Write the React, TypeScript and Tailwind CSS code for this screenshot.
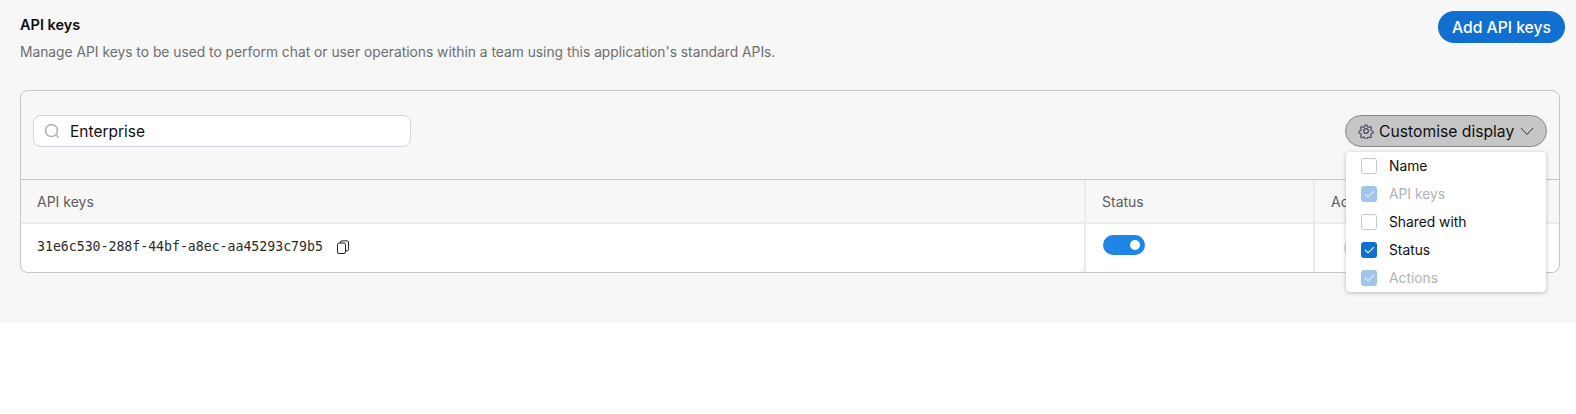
import React from "react";

function Check({ dim }: { dim?: boolean }) {
  return (
    <span className={`flex h-4 w-4 shrink-0 items-center justify-center rounded-[3px] ${dim ? "bg-[#a0c5ec]" : "bg-[#1170cf]"}`}>
      <svg width="11" height="8" viewBox="0 0 11 8" fill="none">
        <path d="M1 4 4 6.800 10 1.200" stroke={dim ? "#e4eefa" : "#ffffff"} strokeWidth="1.100" />
      </svg>
    </span>
  );
}

function Box() {
  return <span className="h-4 w-4 shrink-0 rounded-[3px] border border-[#c6c6c6] bg-white" />;
}

const options = [
  { label: "Name", state: "off" },
  { label: "API keys", state: "dim" },
  { label: "Shared with", state: "off" },
  { label: "Status", state: "on" },
  { label: "Actions", state: "dim" },
];

export default function App() {
  return (
    <div className="h-[414px] w-[1576px] bg-white font-['Inter',sans-serif] overflow-hidden">
      <div className="h-[323px] bg-[#f7f7f7] pl-5 pr-[11px] pt-[11px]">
        <div className="flex items-start justify-between">
          <div>
            <h2 className="pt-[6px] text-[14.500px] leading-[16px] font-semibold text-[#0f0f0f]">API keys</h2>
            <p className="mt-[9px] text-[13.800px] leading-[20px] text-[#6e6e6e]">
              Manage API keys to be used to perform chat or user operations within a team using this application's standard APIs.
            </p>
          </div>
          <button className="h-8 w-[127px] rounded-full bg-[#1170cf] pt-px text-[15.700px] font-medium text-white">Add API keys</button>
        </div>

        <div className="relative mt-[28px] mr-[5px] h-[183px] rounded-lg border border-[#c6c6c6]">
          <div className="flex h-[88px] items-start justify-between pl-3 pr-3 pt-6">
            <div className="flex h-8 w-[378px] items-center rounded-lg border border-[#d0d5dc] bg-white pl-[10px]">
              <svg width="16" height="16" viewBox="0 0 16 16" fill="none" stroke="#a9b3bd" strokeWidth="1.600">
                <circle cx="7.500" cy="7.500" r="6" />
                <path d="M12 12l2.500 2.500" />
              </svg>
              <span className="ml-[10px] pt-px text-[15.500px] text-[#0f0f0f]">Enterprise</span>
            </div>
            <div className="flex h-8 w-[202px] items-center rounded-full border border-[#8a8a8a] bg-[#c6c6c6] pl-[12px] text-[15.700px] text-[#0f0f0f]">
              <svg width="16" height="16" viewBox="0 0 24 24" fill="none" stroke="#454560" strokeWidth="1.800" strokeLinejoin="round">
                <circle cx="12" cy="12" r="3.500" />
                <path d="M10.300 2h3.400l.6 3 2.200 1 2.600-1.600 2.300 2.500-1.600 2.500.9 2.300 3 .6v3.400l-3 .6-.9 2.200 1.600 2.600-2.400 2.400-2.500-1.600-2.200.9-.6 3h-3.400l-.6-3-2.200-.9-2.500 1.600-2.400-2.400 1.600-2.600-.9-2.200-3-.6v-3.400l3-.6.9-2.300-1.600-2.500 2.300-2.500 2.600 1.600 2.200-1z" transform="translate(12 12) scale(.9) translate(-12 -12)" />
              </svg>
              <span className="ml-[5px] whitespace-nowrap pt-px">Customise display</span>
              <svg className="ml-[6px]" width="14" height="14" viewBox="0 0 14 14" fill="none" stroke="#333333" strokeWidth="1">
                <path d="M1 4 7 10.500 13 4" />
              </svg>
            </div>
          </div>

          <div className="flex h-[45px] border-y border-y-[#c6c6c6] border-b-[#ebebeb] border-b-2 text-[14px] text-[#5c5c5c]">
            <div className="flex w-[1063px] items-center pl-4">API keys</div>
            <div className="flex w-[229px] items-center border-l-2 border-[#ebebeb] pl-4">Status</div>
            <div className="flex flex-1 items-center border-l-2 border-[#ebebeb] pl-4">Actions</div>
          </div>
          <div className="flex h-[48px]">
            <div className="flex w-[1063px] items-center rounded-b-lg bg-white pb-[2px] pl-4 font-['DejaVu_Sans_Mono',monospace] text-[13.200px] text-[#2a2a2a]">
              <span>31e6c530-288f-44bf-a8ec-aa45293c79b5</span>
              <svg className="ml-[13px]" width="14" height="14" viewBox="0 0 14 14" fill="none" stroke="#222222" strokeWidth="1">
                <rect x="1.500" y="3" width="8" height="10.500" rx="1.500" />
                <path d="M4.500 3V2A1.200 1.200 0 0 1 5.700.9h5.600A1.200 1.200 0 0 1 12.500 2v7.500a1.200 1.200 0 0 1-1.200 1.200H9.500" />
              </svg>
            </div>
            <div className="flex w-[229px] items-start border-l-2 border-[#ebebeb] bg-white pl-[17px] pt-[11px]">
              <span className="flex h-5 w-[42px] items-center justify-end rounded-full bg-[#2086e6] pr-[5px]">
                <span className="h-[10px] w-[10px] rounded-full bg-white" />
              </span>
            </div>
            <div className="flex flex-1 items-center rounded-br-lg border-l-2 border-[#ebebeb] bg-white pl-[29px]">
              <span className="h-4 w-4 rounded-full border border-[#e8c79a]" />
            </div>
          </div>

          <div className="absolute left-[1325px] top-[61px] w-[200px] rounded-[4px] bg-white shadow-[0_1px_4px_rgba(0,0,0,0.25)]">
            {options.map((o) => (
              <div key={o.label} className="flex h-[28px] items-center pl-[15px]">
                {o.state === "off" ? <Box /> : <Check dim={o.state === "dim"} />}
                <span className={`ml-[12px] text-[13.800px] ${o.state === "dim" ? "text-[#b2b2b2]" : "text-[#0f0f0f]"}`}>{o.label}</span>
              </div>
            ))}
          </div>
        </div>
      </div>
    </div>
  );
}
